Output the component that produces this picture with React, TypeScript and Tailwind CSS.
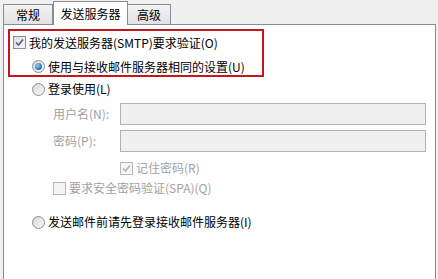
const font = { fontFamily: '"Noto Sans CJK SC", "Noto Sans", sans-serif' };

function CheckBox({ checked, disabled }: { checked?: boolean; disabled?: boolean }) {
  return (
    <span
      className={`flex h-[13px] w-[13px] shrink-0 items-center justify-center border ${
        disabled ? 'border-[#b8b8b8] bg-[#f4f4f4]' : 'border-[#8e8f8f] bg-gradient-to-br from-[#dcdcdc] to-[#fafafa]'
      }`}
    >
      {checked && (
        <svg width="9" height="9" viewBox="0 0 9 9">
          <path
            d="M1 4.5 L3.5 7 L8 1.5"
            fill="none"
            stroke={disabled ? '#b4b4b4' : '#4a5d9a'}
            strokeWidth="1.6"
          />
        </svg>
      )}
    </span>
  );
}

function Radio({ checked }: { checked?: boolean }) {
  return (
    <span className="flex h-[13px] w-[13px] shrink-0 items-center justify-center rounded-full border border-[#8e8f8f] bg-gradient-to-br from-[#d6d6d6] to-[#fbfbfb]">
      {checked && (
        <span className="h-[7px] w-[7px] rounded-full bg-[radial-gradient(circle_at_35%_35%,#8fd0ff,#1e6fb8_70%,#0d4a8a)]" />
      )}
    </span>
  );
}

export default function App() {
  return (
    <div className="h-[279px] w-[438px] overflow-hidden bg-[#f0f0f0] text-[12px] text-black" style={font}>
      {/* tabs */}
      <div className="flex h-[24px] items-end pl-[3px] pt-[1px]">
        <div className="flex h-[20px] w-[50px] items-center justify-center border border-b-0 border-[#898c95] bg-gradient-to-b from-[#f3f3f3] to-[#e3e3e3] pt-[1px]">
          常规
        </div>
        <div className="relative z-10 -mb-px flex h-[24px] w-[75px] items-start justify-center border border-b-0 border-[#898c95] bg-white pt-[3px]">
          发送服务器
        </div>
        <div className="flex h-[20px] w-[43px] items-center justify-center border border-b-0 border-l-0 border-[#898c95] bg-gradient-to-b from-[#f3f3f3] to-[#e3e3e3] pt-[1px]">
          高级
        </div>
      </div>

      {/* panel */}
      <div className="ml-[3px] h-[270px] w-[433px] border border-[#898c95] bg-[#fefefe]">
        <div className="ml-[4px] mt-[4px] flex h-[48px] w-[256px] flex-col gap-[7px] border-2 border-[#c4161c] pl-[3px] pt-[3px]">
          <label className="flex h-[17px] items-center gap-[3px]">
            <CheckBox checked />
            <span>我的发送服务器(SMTP)要求验证(O)</span>
          </label>
          <label className="flex h-[17px] items-center gap-[3px] pl-[19px]">
            <Radio checked />
            <span>使用与接收邮件服务器相同的设置(U)</span>
          </label>
        </div>

        <label className="ml-[28px] mt-[3px] flex h-[18px] items-center gap-[3px]">
          <Radio />
          <span>登录使用(L)</span>
        </label>

        <div className="mt-[5px] flex flex-col gap-[5px] text-[#a2a2a2]">
          <div className="flex h-[22px] items-center">
            <span className="ml-[49px] w-[67px] shrink-0 whitespace-nowrap">用户名(N):</span>
            <div className="h-[22px] w-[306px] border border-[#adb2b5] bg-[#f0f0f0]" />
          </div>
          <div className="flex h-[22px] items-center">
            <span className="ml-[49px] w-[67px] shrink-0 whitespace-nowrap">密码(P):</span>
            <div className="h-[22px] w-[306px] border border-[#adb2b5] bg-[#f0f0f0]" />
          </div>
        </div>

        <label className="ml-[116px] mt-[7px] flex h-[18px] items-center gap-[3px] text-[#a2a2a2]">
          <CheckBox checked disabled />
          <span>记住密码(R)</span>
        </label>
        <label className="ml-[49px] mt-[2px] flex h-[18px] items-center gap-[3px] text-[#a2a2a2]">
          <CheckBox disabled />
          <span>要求安全密码验证(SPA)(Q)</span>
        </label>

        <label className="ml-[28px] mt-[16px] flex h-[18px] items-center gap-[3px]">
          <Radio />
          <span>发送邮件前请先登录接收邮件服务器(I)</span>
        </label>
      </div>
    </div>
  );
}
